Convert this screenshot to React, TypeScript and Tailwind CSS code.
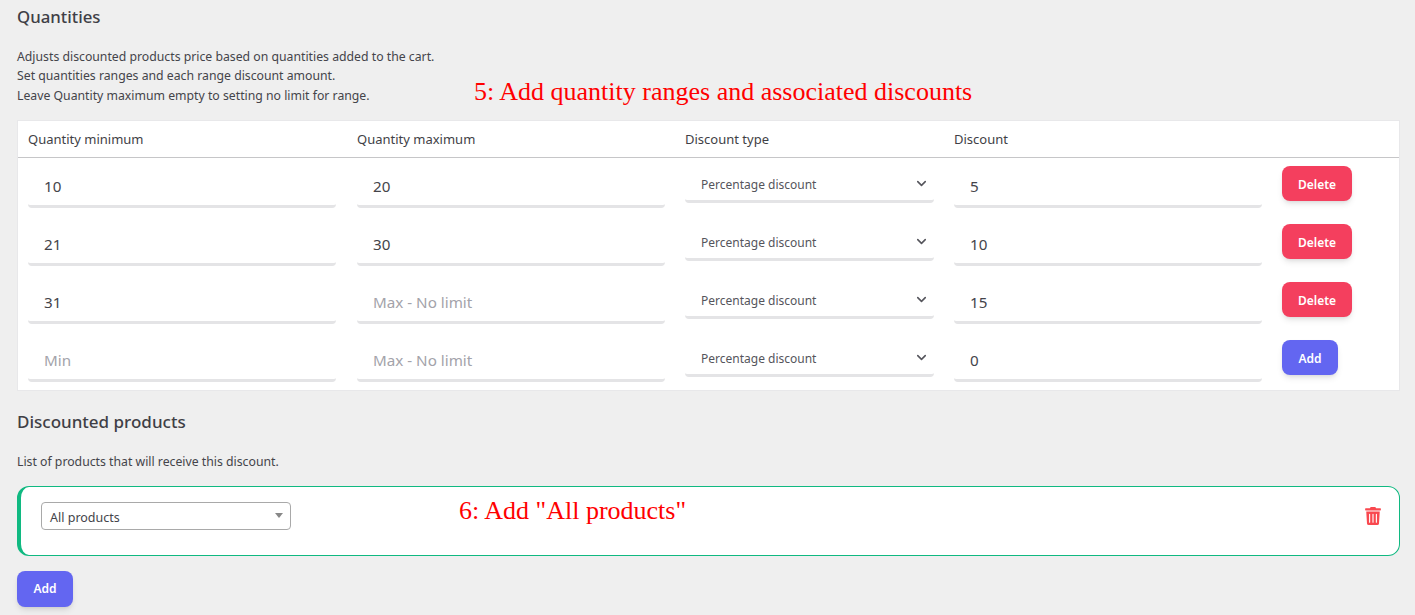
import React from 'react';
import { ChevronDown } from 'lucide-react';

const rows = [
  { min: '10', max: '20', discount: '5', action: 'Delete' },
  { min: '21', max: '30', discount: '10', action: 'Delete' },
  { min: '31', max: '', discount: '15', action: 'Delete' },
  { min: '', max: '', discount: '0', action: 'Add' },
];

const TextField = ({ value, placeholder }: { value: string; placeholder: string }) => (
  <div className="h-[42px] rounded-[4px] border-b-[3px] border-[#e4e4e6] bg-white pl-4 pt-[10px] text-[15.2px] leading-[20px]">
    {value ? <span className="text-[#44444a]">{value}</span> : <span className="text-[#a3a3aa]">{placeholder}</span>}
  </div>
);

const ActionButton = ({ label }: { label: string }) => (
  <button
    className={
      label === 'Delete'
        ? 'h-[35px] w-[70px] rounded-[8px] bg-[#f43f5e] pt-[3px] text-[12px] font-semibold text-white shadow-md'
        : 'h-[35px] w-[56px] rounded-[8px] bg-[#6366f1] pt-[3px] text-[12px] font-semibold text-white shadow-md'
    }
  >
    {label}
  </button>
);

const TrashIcon = () => (
  <svg viewBox="0 0 448 512" className="h-[18px] w-[16px] fill-[#f9484f]">
    <path d="M432 32H312l-9.4-18.7A24 24 0 0 0 281.1 0H166.8a23.72 23.72 0 0 0-21.4 13.3L136 32H16A16 16 0 0 0 0 48v32a16 16 0 0 0 16 16h416a16 16 0 0 0 16-16V48a16 16 0 0 0-16-16zM53.2 467a48 48 0 0 0 47.9 45h245.8a48 48 0 0 0 47.9-45L416 128H32zM304 208a16 16 0 0 1 32 0v224a16 16 0 0 1-32 0zm-96 0a16 16 0 0 1 32 0v224a16 16 0 0 1-32 0zm-96 0a16 16 0 0 1 32 0v224a16 16 0 0 1-32 0z" />
  </svg>
);

export default function App() {
  return (
    <div className="relative h-[615px] overflow-hidden bg-[#efefef] pl-[17px] pr-[15px] pt-[7px] font-['Noto_Sans','Open_Sans',sans-serif] text-[#44444a]">
      <h2 className="text-[16.8px] font-medium leading-[20px] text-[#3f3f46]">Quantities</h2>
      <p className="mt-[19.6px] text-[12.25px] leading-[19.5px]">
        Adjusts discounted products price based on quantities added to the cart.
        <br />
        Set quantities ranges and each range discount amount.
        <br />
        Leave Quantity maximum empty to setting no limit for range.
      </p>

      <div className="mt-[14.9px] border border-[#e8e8ea] bg-white">
        <div className="grid h-[37px] grid-cols-[329px_328px_269px_328px_1fr] items-center border-b border-[#c6c6c8] px-[10px] pt-[2px] text-[13px] text-[#3f3f46]">
          <span>Quantity minimum</span>
          <span>Quantity maximum</span>
          <span>Discount type</span>
          <span>Discount</span>
          <span />
        </div>
        {rows.map((row, i) => (
          <div key={i} className="grid h-[58px] grid-cols-[329px_328px_269px_328px_1fr] px-[10px] pt-[8px]">
            <div className="pr-[21px]">
              <TextField value={row.min} placeholder="Min" />
            </div>
            <div className="pr-[20px]">
              <TextField value={row.max} placeholder="Max - No limit" />
            </div>
            <div className="pr-[20px]">
              <div className="flex h-[37px] items-center justify-between rounded-[4px] border-b-[3px] border-[#e4e4e6] bg-white pl-4 pr-[5px] pt-[4px] text-[12px] text-[#55555c]">
                Percentage discount
                <ChevronDown className="-mt-[3px] h-[15px] w-[15px] text-[#55555c]" strokeWidth={2.5} />
              </div>
            </div>
            <div className="pr-[20px]">
              <TextField value={row.discount} placeholder="" />
            </div>
            <div>
              <ActionButton label={row.action} />
            </div>
          </div>
        ))}
      </div>

      <h2 className="mt-[21px] text-[17px] font-medium leading-[20px] text-[#3f3f46]">Discounted products</h2>
      <p className="mt-[20px] text-[12.25px] leading-[19.5px]">List of products that will receive this discount.</p>

      <div className="mt-[14.5px] flex h-[70px] items-start justify-between rounded-[12px] border border-l-[4px] border-[#10b981] bg-white pl-[20px] pr-[18px] pt-[15px]">
        <div className="flex h-[28px] w-[250px] items-center justify-between rounded-[4px] border border-[#a9a9a9] bg-white pl-2 pr-[7px] pt-[4px] text-[12.5px] text-[#44444a]">
          All products
          <span className="-mt-[4px] h-0 w-0 border-x-[4px] border-t-[5px] border-x-transparent border-t-[#888888]" />
        </div>
        <div className="pt-[5px]">
          <TrashIcon />
        </div>
      </div>

      <button className="mt-[15px] h-[36px] w-[56px] rounded-[8px] bg-[#6366f1] text-[12px] font-semibold text-white shadow-md">
        Add
      </button>

      <div className="absolute left-[474px] top-[77px] font-['Liberation_Serif',serif] text-[26px] leading-[30px] text-[#ff0000]">
        5: Add quantity ranges and associated discounts
      </div>
      <div className="absolute left-[459px] top-[496px] font-['Liberation_Serif',serif] text-[26px] leading-[30px] text-[#ff0000]">
        6: Add "All products"
      </div>
    </div>
  );
}
